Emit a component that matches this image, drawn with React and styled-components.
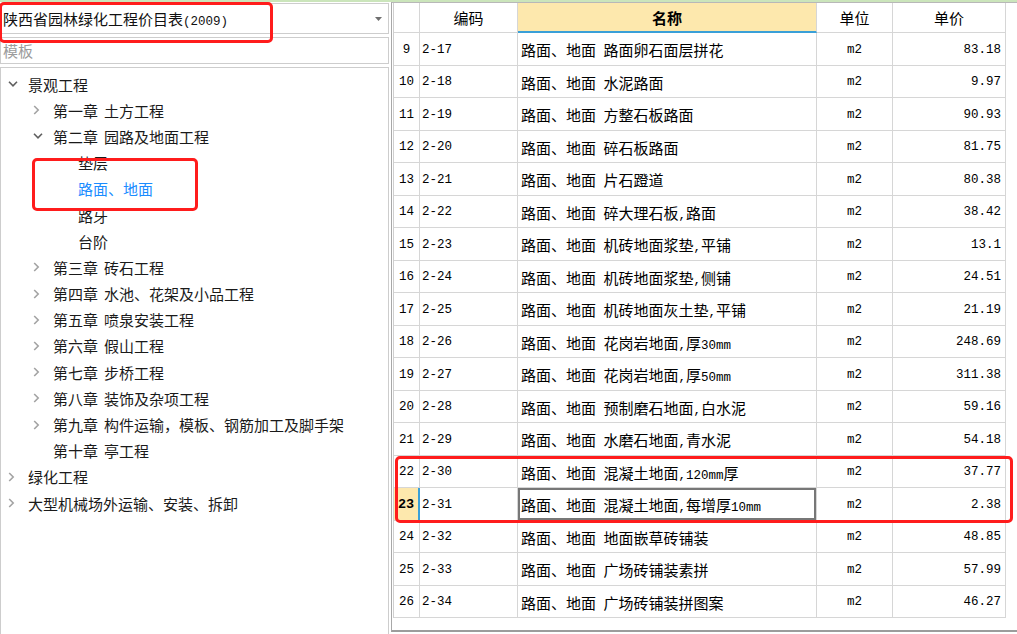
import React from "react";
import styled, { createGlobalStyle, css } from "styled-components";

const GlobalStyle = createGlobalStyle`
  html, body {
    margin: 0;
    padding: 0;
    background: #fff;
  }
  body {
    font-family: "Noto Sans CJK SC", "Liberation Sans", sans-serif;
    color: #111;
  }
`;

const tree = [
  { label: "景观工程", level: 0, toggle: "open" },
  { label: "第一章 土方工程", level: 1, toggle: "closed" },
  { label: "第二章 园路及地面工程", level: 1, toggle: "open" },
  { label: "垫层", level: 2 },
  { label: "路面、地面", level: 2, active: true },
  { label: "路牙", level: 2 },
  { label: "台阶", level: 2 },
  { label: "第三章 砖石工程", level: 1, toggle: "closed" },
  { label: "第四章 水池、花架及小品工程", level: 1, toggle: "closed" },
  { label: "第五章 喷泉安装工程", level: 1, toggle: "closed" },
  { label: "第六章 假山工程", level: 1, toggle: "closed" },
  { label: "第七章 步桥工程", level: 1, toggle: "closed" },
  { label: "第八章 装饰及杂项工程", level: 1, toggle: "closed" },
  { label: "第九章 构件运输，模板、钢筋加工及脚手架", level: 1, toggle: "closed" },
  { label: "第十章 亭工程", level: 1 },
  { label: "绿化工程", level: 0, toggle: "closed" },
  { label: "大型机械场外运输、安装、拆卸", level: 0, toggle: "closed" },
];

const rows = [
  [9, "2-17", "路面卵石面层拼花", "83.18"],
  [10, "2-18", "水泥路面", "9.97"],
  [11, "2-19", "方整石板路面", "90.93"],
  [12, "2-20", "碎石板路面", "81.75"],
  [13, "2-21", "片石蹬道", "80.38"],
  [14, "2-22", "碎大理石板,路面", "38.42"],
  [15, "2-23", "机砖地面浆垫,平铺", "13.1"],
  [16, "2-24", "机砖地面浆垫,侧铺", "24.51"],
  [17, "2-25", "机砖地面灰土垫,平铺", "21.19"],
  [18, "2-26", "花岗岩地面,厚30mm", "248.69"],
  [19, "2-27", "花岗岩地面,厚50mm", "311.38"],
  [20, "2-28", "预制磨石地面,白水泥", "59.16"],
  [21, "2-29", "水磨石地面,青水泥", "54.18"],
  [22, "2-30", "混凝土地面,120mm厚", "37.77"],
  [23, "2-31", "混凝土地面,每增厚10mm", "2.38"],
  [24, "2-32", "地面嵌草砖铺装", "48.85"],
  [25, "2-33", "广场砖铺装素拼", "57.99"],
  [26, "2-34", "广场砖铺装拼图案", "46.27"],
];

const CURRENT = 23;

const Screen = styled.div`
  position: relative;
  width: 1017px;
  height: 634px;
  overflow: hidden;
  display: flex;
  flex-direction: column;
  background: #fff;
`;

const TopStrip = styled.div`
  height: 2px;
  flex-shrink: 0;
  background: #cbe5bb;
`;

const Body = styled.div`
  flex: 1;
  display: flex;
  min-height: 0;
`;

const LeftPanel = styled.div`
  width: 389px;
  flex-shrink: 0;
  display: flex;
  flex-direction: column;
  gap: 3px;
  padding-top: 1px;
  box-sizing: border-box;
`;

const Field = styled.div`
  box-sizing: border-box;
  height: ${(p) => p.$height}px;
  flex-shrink: 0;
  border: 1px solid #cdcdcd;
  display: flex;
  align-items: center;
  justify-content: space-between;
  padding: 0 6px 0 2px;
  font-size: 15px;
  color: ${(p) => (p.$placeholder ? "#9b9b9b" : "#111")};
`;

const Latin = styled.span`
  font-family: "Liberation Mono", monospace;
  font-size: 12.5px;
  white-space: pre;
`;

const Tree = styled.div`
  flex: 1;
  border: 1px solid #cdcdcd;
  border-bottom: none;
  padding-top: 3px;
`;

const TreeRow = styled.div`
  height: 26.2px;
  display: flex;
  align-items: center;
  padding-left: ${(p) => p.$level * 25 + 5}px;
  font-size: 15px;
  color: ${(p) => (p.$active ? "#1a8cff" : "#1a1a1a")};
  white-space: nowrap;
`;

const Toggle = styled.span`
  width: 22px;
  flex-shrink: 0;
  display: flex;
  align-items: center;
  padding-left: 2px;
  box-sizing: border-box;
`;

const Chapter = styled.span`
  margin-right: 6px;
`;

const RightPanel = styled.div`
  flex: 1;
  margin-left: 2px;
  height: 630px;
  border-left: 1px solid #a8a8a8;
  border-top: 1px solid #b8b8b8;
  border-bottom: 2px solid #9c9c9c;
  padding-left: 1px;
  box-sizing: border-box;
`;

const Grid = styled.div`
  display: grid;
  grid-template-columns: 26px 98px 299px 76px 113px;
  grid-auto-rows: 32.5px;
  grid-template-rows: 30px;
  width: max-content;
  border-left: 1px solid #cfcfcf;
`;

const Cell = styled.div`
  box-sizing: border-box;
  display: flex;
  align-items: center;
  border-right: 1px solid #d6d6d6;
  border-bottom: 1px solid #d6d6d6;
  padding-top: 2px;
  font-size: 15px;
  color: #000;
  white-space: nowrap;
  overflow: hidden;
  justify-content: ${(p) =>
    p.$align === "right" ? "flex-end" : p.$align === "center" ? "center" : "flex-start"};
  padding-left: ${(p) => (p.$align ? 0 : 2)}px;
  padding-right: ${(p) => (p.$align === "right" ? 4 : 0)}px;
  ${(p) =>
    p.$mono &&
    css`
      font-family: "Liberation Mono", monospace;
      font-size: 12.5px;
    `}
`;

const HeadCell = styled(Cell)`
  padding-top: 0;
  ${(p) =>
    p.$active &&
    css`
      background: #fde8ad;
      font-weight: bold;
      border-bottom: 2px solid #3aa0d8;
    `}
`;

const NumCell = styled(Cell)`
  ${(p) =>
    p.$current &&
    css`
      background: #fde8ad;
      font-weight: bold;
      font-size: 13.5px;
      border-right: 2px solid #3aa0d8;
    `}
`;

const NameCell = styled(Cell)`
  padding-left: 3px;
  ${(p) =>
    p.$selected &&
    css`
      box-shadow: inset 0 0 0 2px #777;
    `}
`;

const Mark = styled.div`
  position: absolute;
  box-sizing: border-box;
  border: 3px solid #ff1c1c;
  border-radius: 5px;
  pointer-events: none;
`;

const MarkCombo = styled(Mark)`
  left: -1px;
  top: 2px;
  width: 274px;
  height: 41px;
`;

const MarkTree = styled(Mark)`
  left: 32px;
  top: 158px;
  width: 166px;
  height: 53px;
`;

const MarkRows = styled(Mark)`
  left: 395px;
  top: 456px;
  width: 618px;
  height: 67px;
`;

const Mixed = ({ text }) => (
  <span>
    {text
      .split(/([\x20-\x7e]+)/)
      .filter(Boolean)
      .map((part, i) =>
        /^[\x20-\x7e]+$/.test(part) ? <Latin key={i}>{part}</Latin> : <React.Fragment key={i}>{part}</React.Fragment>
      )}
  </span>
);

const ChevronDown = () => (
  <svg width="10" height="6" viewBox="0 0 10 6">
    <path d="M1 0.8 L5 4.8 L9 0.8" fill="none" stroke="#5f5f5f" strokeWidth="1.6" />
  </svg>
);

const ChevronRight = () => (
  <svg width="7" height="10" viewBox="0 0 7 10">
    <path d="M1.2 1 L5.2 5 L1.2 9" fill="none" stroke="#a3a3a3" strokeWidth="1.6" />
  </svg>
);

const DropArrow = () => (
  <svg width="7" height="4" viewBox="0 0 7 4">
    <path d="M0 0 H7 L3.5 4 Z" fill="#6f6f6f" />
  </svg>
);

const TreeItem = ({ item }) => {
  const space = item.label.indexOf(" ");
  return (
    <TreeRow $level={item.level} $active={item.active}>
      <Toggle>
        {item.toggle === "open" && <ChevronDown />}
        {item.toggle === "closed" && <ChevronRight />}
      </Toggle>
      {space > 0 ? (
        <>
          <Chapter>{item.label.slice(0, space)}</Chapter>
          <span>{item.label.slice(space + 1)}</span>
        </>
      ) : (
        <span>{item.label}</span>
      )}
    </TreeRow>
  );
};

export default function App() {
  return (
    <>
      <GlobalStyle />
      <Screen>
        <TopStrip />
        <Body>
          <LeftPanel>
            <Field $height={31}>
              <Mixed text="陕西省园林绿化工程价目表(2009)" />
              <DropArrow />
            </Field>
            <Field $height={27} $placeholder>
              模板
            </Field>
            <Tree>
              {tree.map((item) => (
                <TreeItem key={item.label} item={item} />
              ))}
            </Tree>
          </LeftPanel>
          <RightPanel>
            <Grid>
              <HeadCell />
              <HeadCell $align="center">编码</HeadCell>
              <HeadCell $align="center" $active>
                名称
              </HeadCell>
              <HeadCell $align="center">单位</HeadCell>
              <HeadCell $align="center">单价</HeadCell>
              {rows.map(([no, code, name, price]) => (
                <React.Fragment key={no}>
                  <NumCell $align="center" $mono $current={no === CURRENT}>
                    {no}
                  </NumCell>
                  <Cell $mono>{code}</Cell>
                  <NameCell $selected={no === CURRENT}>
                    <Mixed text={`路面、地面 ${name}`} />
                  </NameCell>
                  <Cell $align="center" $mono>
                    m2
                  </Cell>
                  <Cell $align="right" $mono>
                    {price}
                  </Cell>
                </React.Fragment>
              ))}
            </Grid>
          </RightPanel>
        </Body>
        <MarkCombo />
        <MarkTree />
        <MarkRows />
      </Screen>
    </>
  );
}
